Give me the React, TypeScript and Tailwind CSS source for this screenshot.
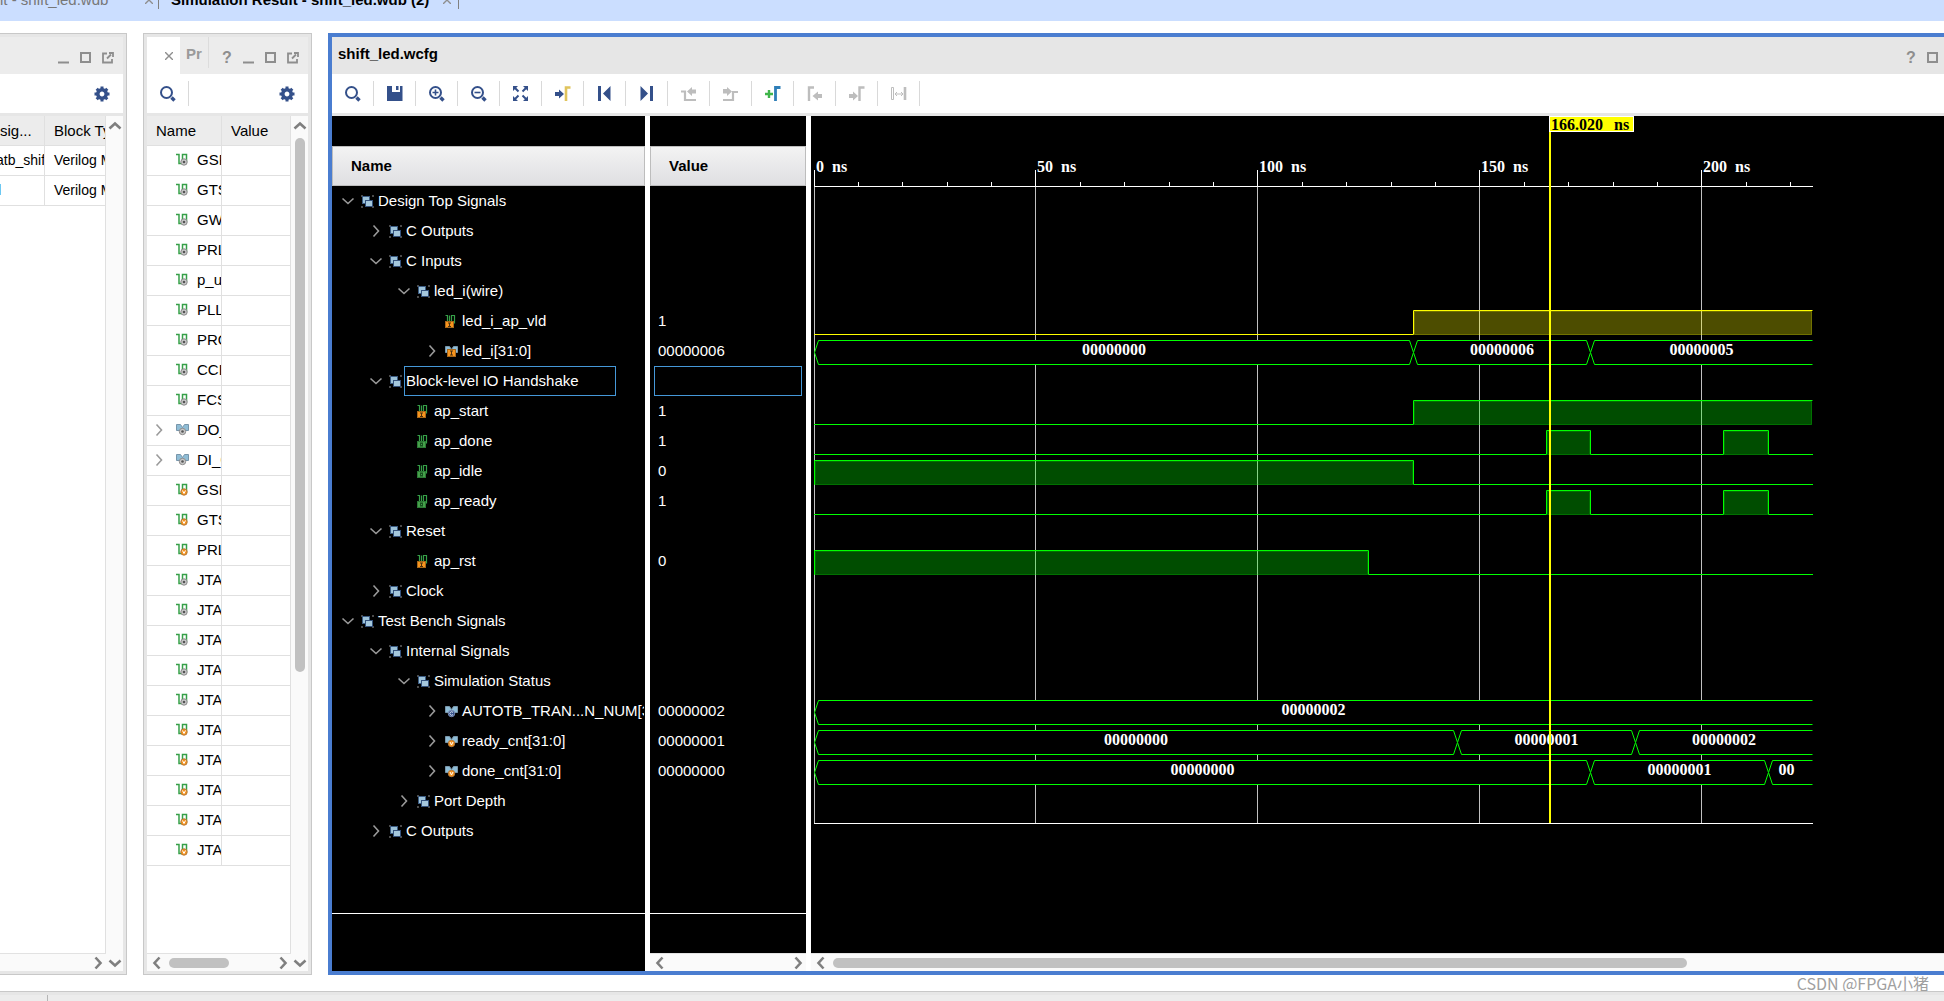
import type { ReactNode } from 'react';
import clsx from 'clsx';

type Dir = 'up' | 'down' | 'left' | 'right';

const CHEVRONS: Record<Dir, string> = {
    up: 'M1.5 9.5 7 4.5l5.5 5',
    down: 'M1.5 4.5 7 9.5l5.5-5',
    left: 'M9.5 1.5 4.5 7l5 5.5',
    right: 'M4.5 1.5 9.5 7l-5 5.5',
};

function Chevron({ dir, thin = false }: { dir: Dir; thin?: boolean }) {
    return (
        <svg width="14" height="14" viewBox="0 0 14 14" fill="none" stroke={thin ? '#9a9a9a' : '#7f7f7f'} strokeWidth={thin ? 1.6 : 2.6}>
            <path d={CHEVRONS[dir]} />
        </svg>
    );
}

/* ---------- signal icons ---------- */

type Kind = 'group' | 'net' | 'reg' | 'in' | 'out' | 'busNet' | 'busReg' | 'busIn' | 'busConst';

const Badge = ({ x, y, kind }: { x: number; y: number; kind: 'net' | 'reg' | 'const' }) => {
    const fill = { net: '#c9c9c9', reg: '#f7941d', const: '#33508a' }[kind];
    const ring = { net: '#8b8b8b', reg: '#b5793a', const: '#7f93bb' }[kind];
    return (
        <g>
            <circle cx={x} cy={y} r="3.2" fill={fill} stroke={ring} />
            {kind === 'net' && <circle cx={x} cy={y} r="1.3" fill="#555" />}
            {kind === 'reg' && <path d={`M${x - 1.5} ${y - 1.5}l1.5 3 1.5-3`} stroke="#fff" fill="none" />}
            {kind === 'const' && <path d={`M${x + 1.5} ${y - 1}a1.7 1.7 0 1 0 0 2`} stroke="#dfe6f5" fill="none" />}
        </g>
    );
};

function SignalIcon({ kind }: { kind: Kind }) {
    if (kind === 'group') {
        return (
            <svg width="13" height="13" viewBox="0 0 13 13">
                <path d="M0 0h2v2H0zM11 0h2v2h-2zM0 11h2v2H0zM11 11h2v2h-2z" fill="#4a4a4a" />
                <rect x="1.5" y="1.5" width="7" height="7" fill="#9dc3da" stroke="#3b5b82" />
                <rect x="4.5" y="5.5" width="7" height="6" fill="#a5c8dd" stroke="#33517c" />
            </svg>
        );
    }
    if (kind.startsWith('bus')) {
        return (
            <svg width="13" height="13" viewBox="0 0 13 13">
                <path d="M.5 1.5h4l2 3 2-3h4v6h-12z" fill="#8fbdd6" stroke="#7896ab" />
                {kind === 'busNet' && <Badge x={6.5} y={8.5} kind="net" />}
                {kind === 'busReg' && <Badge x={6.5} y={8.5} kind="reg" />}
                {kind === 'busConst' && <Badge x={6.5} y={8.5} kind="const" />}
                {kind === 'busIn' && (
                    <g>
                        <rect x="2.5" y="4.5" width="8" height="7" fill="#f7941d" stroke="#a8671a" />
                        <path d="M5 6h3M6.5 6v4M5 10h3" stroke="#4a3010" />
                    </g>
                )}
            </svg>
        );
    }
    const boxed = kind === 'in' || kind === 'out';
    return (
        <svg width="13" height="13" viewBox="0 0 13 13">
            <path
                d={boxed ? 'M.5.5h2v6M6.500 6.500v-6h3v8M4.500 6.500V.5' : 'M0 1.5h3v9h3.500v-9h4v7'}
                fill="none"
                stroke="#36a048"
                strokeWidth={boxed ? 1.2 : 1.5}
            />
            {kind === 'net' && <Badge x={8} y={9} kind="net" />}
            {kind === 'reg' && <Badge x={8} y={9} kind="reg" />}
            {kind === 'in' && (
                <g>
                    <rect x=".5" y="6.5" width="8" height="6" fill="#f7941d" stroke="#a8671a" />
                    <path d="M3 8h3M4.500 8v3.5M3 11.5h3" stroke="#4a3010" />
                </g>
            )}
            {kind === 'out' && (
                <g>
                    <rect x=".5" y="6.5" width="8" height="6" fill="#46a04b" stroke="#2c7a35" />
                    <rect x="3.5" y="8" width="2" height="3" fill="none" stroke="#175020" />
                </g>
            )}
        </svg>
    );
}

/* ---------- toolbar icons ---------- */

const NAVY = '#34508a';
const DIM = '#bdbdbd';

const icons: Record<string, ReactNode> = {
    Search: (
        <g fill="none" stroke={NAVY} strokeWidth="2">
            <circle cx="6.5" cy="6.5" r="5.5" />
            <path d="m11.5 11.5 3 3" strokeWidth="3.4" />
        </g>
    ),
    Save: <path d="M0 0h5v6h8V0h2.5v15H0zM9 0h2.5v4H9z" fill={NAVY} />,
    'Zoom In': (
        <g fill="none" stroke={NAVY} strokeWidth="2">
            <circle cx="6.5" cy="6.5" r="5.5" />
            <path d="M3.5 6.5h6M6.5 3.5v6" strokeWidth="1.6" />
            <path d="m11.5 11.5 3 3" strokeWidth="3.4" />
        </g>
    ),
    'Zoom Out': (
        <g fill="none" stroke={NAVY} strokeWidth="2">
            <circle cx="6.5" cy="6.5" r="5.5" />
            <path d="M3.5 6.5h6" strokeWidth="1.6" />
            <path d="m11.5 11.5 3 3" strokeWidth="3.4" />
        </g>
    ),
    'Zoom Fit': (
        <g fill={NAVY} stroke={NAVY}>
            <path d="M0 0h5L0 5zM15 0h-5l5 5zM0 15h5l-5-5zM15 15h-5l5-5z" stroke="none" />
            <path d="m2 2 3.500 3.500M13 2 9.500 5.500M2 13l3.500-3.500M13 13 9.500 9.500" strokeWidth="2" />
        </g>
    ),
    'Go to Cursor': (
        <g>
            <path d="M0 6h4V3.5L9 8l-5 4.5V10H0z" fill={NAVY} />
            <path d="M11 15V1.5h4.5" fill="none" stroke="#e0c45c" strokeWidth="2.6" />
        </g>
    ),
    'Go to Time 0': <path d="M1 0h3v15H1zM13.5 0v15L6 7.5z" fill={NAVY} />,
    'Go to Last Time': <path d="M11 0h3v15h-3zM1.500 0v15L9 7.500z" fill={NAVY} />,
    'Previous Transition': (
        <g>
            <path d="M0 5.500h4v8.500h11" fill="none" stroke={DIM} strokeWidth="2.2" />
            <path d="M15 3.500v4h-4V10L6 5.500 11 1v2.500z" fill={DIM} />
        </g>
    ),
    'Next Transition': (
        <g>
            <path d="M0 14h10V6h5" fill="none" stroke={DIM} strokeWidth="2.2" />
            <path d="M0 3h4V1l5 4.500L4 10V7.500H0z" fill={DIM} />
        </g>
    ),
    'Add Marker': (
        <g fill="none">
            <path d="M0 8h8M4 4v8" stroke="#3fb54a" strokeWidth="2.4" />
            <path d="M10.500 15V1.500h5" stroke="#2f7fb8" strokeWidth="2.800" />
        </g>
    ),
    'Previous Marker': (
        <g>
            <path d="M2 15V1.500h5" fill="none" stroke={DIM} strokeWidth="2.4" />
            <path d="M15 8v4h-4v2.500L5.500 10 11 5.500V8z" fill={DIM} />
        </g>
    ),
    'Next Marker': (
        <g>
            <path d="M10.500 15V1.500h5" fill="none" stroke={DIM} strokeWidth="2.400" />
            <path d="M0 8h4V5.500L9 10l-5 4.500V12H0z" fill={DIM} />
        </g>
    ),
    'Swap Cursors': (
        <g fill="none" stroke={DIM}>
            <path d="M.5 1.500h2v12h-2zM4 8h8M6 6 4 8l2 2M10 6l2 2-2 2" />
            <path d="M14 1v13" strokeWidth="2.600" />
        </g>
    ),
};

function ToolButton({ name }: { name: string }) {
    return (
        <button aria-label={name} title={name} className="flex h-[25px] w-[42px] shrink-0 items-center justify-center border-r border-[#d9d9d9]">
            <svg width="16" height="16" viewBox="0 0 16 16">{icons[name]}</svg>
        </button>
    );
}

function GearButton() {
    return (
        <button aria-label="Settings" className="mr-[13px] ml-auto">
            <svg width="16" height="16" viewBox="-8 -8 16 16">
                <circle r="4.200" fill="none" stroke={NAVY} strokeWidth="3.600" />
                {[0, 45, 90, 135].map((a) => (
                    <path key={a} d="M0-7.500v3M0 4.500v3" stroke={NAVY} strokeWidth="3" transform={`rotate(${a})`} />
                ))}
            </svg>
        </button>
    );
}

function WindowButtons({ names }: { names: string[] }) {
    return (
        <div className="ml-auto flex pt-[5px]">
            {names.map((name) => (
                <button key={name} aria-label={name} className="flex h-5 w-[22px] items-center justify-center text-base font-bold text-[#8e8e8e]">
                    {name === 'Help' ? (
                        '?'
                    ) : (
                        <svg width="12" height="12" viewBox="0 0 12 12" fill="none" stroke="#8e8e8e" strokeWidth="2">
                            {name === 'Minimize' && <path d="M0 10.500h11" />}
                            {name === 'Maximize' && <path d="M1 1h9v9h-9z" />}
                            {name === 'Float' && <path d="M5 1.500H1v9h9V7M5 6.500l4-4M7 1h4v4" strokeWidth="1.800" />}
                        </svg>
                    )}
                </button>
            ))}
        </div>
    );
}

/* ---------- scroll bars ---------- */

function HScroll({ left = true, right = true, thumb }: { left?: boolean; right?: boolean; thumb?: string }) {
    return (
        <div className="flex h-[18px] shrink-0 items-center border-t border-[#e2e2e2] bg-[#fafafa]">
            {left && (
                <button aria-label="Scroll left" className="flex w-5 shrink-0 justify-center">
                    <Chevron dir="left" />
                </button>
            )}
            <div className="flex-1 px-[2px]">{thumb && <div className={clsx('h-[10px] rounded-full bg-[#c1c1c1]', thumb)} />}</div>
            {right && (
                <button aria-label="Scroll right" className="flex w-4 shrink-0 justify-center">
                    <Chevron dir="right" />
                </button>
            )}
        </div>
    );
}

function VScroll({ thumb }: { thumb?: string }) {
    return (
        <div className="flex w-[17px] shrink-0 flex-col items-center bg-[#fafafa]">
            <button aria-label="Scroll up" className="flex h-5 items-center">
                <Chevron dir="up" />
            </button>
            <div className="flex-1 py-[2px]">{thumb && <div className={clsx('w-[10px] rounded-full bg-[#c1c1c1]', thumb)} />}</div>
            <button aria-label="Scroll down" className="flex h-4 items-center">
                <Chevron dir="down" />
            </button>
        </div>
    );
}

/* ---------- left panels ---------- */

const head = 'h-[30px] overflow-hidden border-r border-b border-[#e0e0e0] p-0 text-left font-normal whitespace-nowrap';
const cell = 'h-[30px] overflow-hidden border-r border-b border-[#e0e0e0] p-0 pb-[2px] text-left whitespace-nowrap';

function ScopePanel() {
    return (
        <section className="flex w-[127px] shrink-0 border border-l-0 border-[#c8c8c8]">
            <div className="flex min-w-0 flex-1 flex-col border-[3px] border-l-0 border-[#e6e6e6]">
                <div className="flex h-[37px] shrink-0 items-center bg-[#ececec] pr-1">
                    <WindowButtons names={['Minimize', 'Maximize', 'Float']} />
                </div>
                <div className="flex h-[42px] shrink-0 items-center border-b-[3px] border-[#e6e6e6]">
                    <GearButton />
                </div>
                <div className="flex min-h-0 flex-1">
                    <div className="flex min-w-0 flex-1 flex-col">
                        <div className="flex-1 overflow-hidden border-r border-[#e0e0e0]">
                            <table className="w-full table-fixed border-separate border-spacing-0">
                                <thead>
                                    <tr className="bg-[#ececec]">
                                        <th className={clsx(head, 'w-[45px]')}>sig...</th>
                                        <th className={clsx(head, 'border-r-0 pl-[9px]')}>Block Type</th>
                                    </tr>
                                </thead>
                                <tbody className="text-sm leading-5">
                                    <tr>
                                        <td className={cell}>
                                            <div className="-ml-1">atb_shift</div>
                                        </td>
                                        <td className={clsx(cell, 'border-r-0 pl-[9px]')}>Verilog Module</td>
                                    </tr>
                                    <tr>
                                        <td className={cell}>
                                            <div className="h-[11px] w-px bg-[#6cc8f2]" />
                                        </td>
                                        <td className={clsx(cell, 'border-r-0 pl-[9px]')}>Verilog Module</td>
                                    </tr>
                                </tbody>
                            </table>
                        </div>
                        <HScroll left={false} />
                    </div>
                    <VScroll />
                </div>
            </div>
        </section>
    );
}

const objects: [string, Kind][] = [
    ['GSR', 'net'],
    ['GTS', 'net'],
    ['GWE', 'net'],
    ['PRLD', 'net'],
    ['p_up_tmp', 'net'],
    ['PLL_LOCKG', 'net'],
    ['PROGB_GLBL', 'net'],
    ['CCLKO_GLBL', 'net'],
    ['FCSBO_GLBL', 'net'],
    ['DO_GLBL', 'busNet'],
    ['DI_GLBL', 'busNet'],
    ['GSR_int', 'reg'],
    ['GTS_int', 'reg'],
    ['PRLD_int', 'reg'],
    ['JTAG_TDO_GLBL', 'net'],
    ['JTAG_TCK_GLBL', 'net'],
    ['JTAG_TDI_GLBL', 'net'],
    ['JTAG_TMS_GLBL', 'net'],
    ['JTAG_TRST_GLBL', 'net'],
    ['JTAG_CAPTURE_GLBL', 'reg'],
    ['JTAG_RESET_GLBL', 'reg'],
    ['JTAG_SHIFT_GLBL', 'reg'],
    ['JTAG_UPDATE_GLBL', 'reg'],
    ['JTAG_RUNTEST_GLBL', 'reg'],
];

function ObjectsPanel() {
    return (
        <section className="flex w-[169px] shrink-0 border border-[#c8c8c8]">
            <div className="flex min-w-0 flex-1 flex-col border-[3px] border-[#e6e6e6]">
                <div className="flex h-[37px] shrink-0 items-center bg-[#ececec] pr-1">
                    <button aria-label="Close tab" className="flex h-full w-[33px] items-center justify-end bg-white pr-[7px]">
                        <svg width="8" height="8" viewBox="0 0 8 8" stroke="#8e8e8e" strokeWidth="1.400">
                            <path d="m0 0 8 8M8 0 0 8" />
                        </svg>
                    </button>
                    <button className="h-[31px] w-[29px] self-start border-r border-[#dcdcdc] pt-[2px] font-bold text-[#9a9a9a]">Pr</button>
                    <WindowButtons names={['Help', 'Minimize', 'Maximize', 'Float']} />
                </div>
                <div className="flex h-[42px] shrink-0 items-center border-b-[3px] border-[#e6e6e6]">
                    <ToolButton name="Search" />
                    <GearButton />
                </div>
                <div className="flex min-h-0 flex-1">
                    <div className="flex min-w-0 flex-1 flex-col">
                        <div className="flex-1 overflow-hidden border-r border-[#e0e0e0]">
                            <table className="w-full table-fixed border-separate border-spacing-0">
                                <thead>
                                    <tr className="bg-[#ececec]">
                                        <th className={clsx(head, 'w-[75px] pl-[9px]')}>Name</th>
                                        <th className={clsx(head, 'border-r-0 pl-[9px]')}>Value</th>
                                    </tr>
                                </thead>
                                <tbody>
                                    {objects.map(([name, kind]) => (
                                        <tr key={name}>
                                            <td className={cell}>
                                                <div className="flex items-center">
                                                    <div className="w-[29px] shrink-0 pl-[5px]">
                                                        {kind === 'busNet' && (
                                                            <button aria-label={`Expand ${name}`} className="block">
                                                                <Chevron dir="right" thin />
                                                            </button>
                                                        )}
                                                    </div>
                                                    <div className="w-[21px] shrink-0">
                                                        <SignalIcon kind={kind} />
                                                    </div>
                                                    {name}
                                                </div>
                                            </td>
                                            <td className={clsx(cell, 'border-r-0')} />
                                        </tr>
                                    ))}
                                </tbody>
                            </table>
                        </div>
                        <HScroll thumb="w-[60px]" />
                    </div>
                    <VScroll thumb="h-[534px]" />
                </div>
            </div>
        </section>
    );
}

/* ---------- wave window ---------- */

type Row = {
    name: string;
    level: number;
    kind: Kind;
    arrow?: Dir;
    value?: string;
    selected?: boolean;
    color?: string;
    // level signals: [start, end] of each high pulse, in ns
    high?: [number, number][];
    // buses: [start, end, text], in ns
    bus?: [number, number, string][];
};

const END = 225;

const rows: Row[] = [
    { name: 'Design Top Signals', level: 0, kind: 'group', arrow: 'down' },
    { name: 'C Outputs', level: 1, kind: 'group', arrow: 'right' },
    { name: 'C Inputs', level: 1, kind: 'group', arrow: 'down' },
    { name: 'led_i(wire)', level: 2, kind: 'group', arrow: 'down' },
    { name: 'led_i_ap_vld', level: 3, kind: 'in', value: '1', color: '#ffff00', high: [[135, END]] },
    { name: 'led_i[31:0]', level: 3, kind: 'busIn', arrow: 'right', value: '00000006', bus: [[0, 135, '00000000'], [135, 175, '00000006'], [175, END, '00000005']] },
    { name: 'Block-level IO Handshake', level: 1, kind: 'group', arrow: 'down', selected: true },
    { name: 'ap_start', level: 2, kind: 'in', value: '1', high: [[135, END]] },
    { name: 'ap_done', level: 2, kind: 'out', value: '1', high: [[165, 175], [205, 215]] },
    { name: 'ap_idle', level: 2, kind: 'out', value: '0', high: [[0, 135]] },
    { name: 'ap_ready', level: 2, kind: 'out', value: '1', high: [[165, 175], [205, 215]] },
    { name: 'Reset', level: 1, kind: 'group', arrow: 'down' },
    { name: 'ap_rst', level: 2, kind: 'in', value: '0', high: [[0, 125]] },
    { name: 'Clock', level: 1, kind: 'group', arrow: 'right' },
    { name: 'Test Bench Signals', level: 0, kind: 'group', arrow: 'down' },
    { name: 'Internal Signals', level: 1, kind: 'group', arrow: 'down' },
    { name: 'Simulation Status', level: 2, kind: 'group', arrow: 'down' },
    { name: 'AUTOTB_TRAN...N_NUM[31:0]', level: 3, kind: 'busConst', arrow: 'right', value: '00000002', bus: [[0, END, '00000002']] },
    { name: 'ready_cnt[31:0]', level: 3, kind: 'busReg', arrow: 'right', value: '00000001', bus: [[0, 145, '00000000'], [145, 185, '00000001'], [185, END, '00000002']] },
    { name: 'done_cnt[31:0]', level: 3, kind: 'busReg', arrow: 'right', value: '00000000', bus: [[0, 175, '00000000'], [175, 215, '00000001'], [215, END, '00']] },
    { name: 'Port Depth', level: 2, kind: 'group', arrow: 'right' },
    { name: 'C Outputs', level: 1, kind: 'group', arrow: 'right' },
];

const ROW_H = 30;
const RULER_H = 70;
const BOTTOM = 707;
const CURSOR = 166.02;

const tx = (ns: number) => 3 + Math.floor(ns * 4.439);

function LevelTrace({ row, top }: { row: Row; top: number }) {
    const color = row.color ?? '#00ff00';
    const hi = top + 4.5;
    const lo = top + 28.5;
    let d = `M${tx(0)} ${lo}`;
    for (const [a, b] of row.high!) {
        d += `H${tx(a) + 0.5}V${hi}H${tx(b) + 0.5}`;
        if (b < END) d += `V${lo}`;
    }
    if (row.high![row.high!.length - 1][1] < END) d += `H${tx(END) + 1}`;
    return (
        <g>
            {row.high!.map(([a, b]) => (
                <rect key={a} x={tx(a) + 1.5} y={hi + 1} width={tx(b) - tx(a) - 2} height={23} fill={color} fillOpacity="0.3" stroke={color} strokeOpacity="0.35" />
            ))}
            <path d={d} fill="none" stroke={color} />
        </g>
    );
}

function BusTrace({ row, top }: { row: Row; top: number }) {
    const hi = top + 4.5;
    const lo = top + 28.5;
    const mid = top + 16.5;
    return (
        <g>
            {row.bus!.map(([a, b, text]) => {
                const x1 = tx(a) + 0.5;
                const x2 = tx(b) + 0.5;
                const open = b === END;
                const narrow = x2 - x1 < 64;
                return (
                    <g key={a}>
                        <path
                            d={
                                open
                                    ? `M${x2} ${hi}H${x1 + 4}L${x1} ${mid}L${x1 + 4} ${lo}H${x2}`
                                    : `M${x1} ${mid}L${x1 + 4} ${hi}H${x2 - 4}L${x2} ${mid}L${x2 - 4} ${lo}H${x1 + 4}Z`
                            }
                            fill="#000"
                            stroke="#00ff00"
                        />
                        <text x={narrow ? x1 + 10 : (x1 + x2) / 2} y={top + 19} textAnchor={narrow ? 'start' : 'middle'} fill="#fff">
                            {text}
                        </text>
                    </g>
                );
            })}
        </g>
    );
}

function Waves() {
    const majors = [0, 50, 100, 150, 200];
    const minors = Array.from({ length: 23 }, (_, i) => i * 10).filter((t) => t % 50 !== 0);
    return (
        <svg width="1002" height="720" className="block shrink-0 font-['Liberation_Serif',serif] text-base font-bold">
            {majors.map((t) => (
                <g key={t}>
                    <path d={`M${tx(t) + 0.5} ${RULER_H}V${BOTTOM}`} stroke="#c0c0c0" />
                    <path d={`M${tx(t) + 0.5} 54V${RULER_H}`} stroke="#fff" />
                    <text x={tx(t) + 2} y="56" fill="#fff">
                        {t} <tspan dx="4">ns</tspan>
                    </text>
                </g>
            ))}
            {minors.map((t) => (
                <path key={t} d={`M${tx(t) + 0.5} 66v4`} stroke="#fff" />
            ))}
            <path d={`M${tx(0)} ${RULER_H + 0.5}H${tx(END) + 1}M${tx(0)} ${BOTTOM + 0.5}H${tx(END) + 1}`} stroke="#fff" />
            {rows.map((row, i) => {
                const top = RULER_H + i * ROW_H;
                if (row.high) return <LevelTrace key={i} row={row} top={top} />;
                if (row.bus) return <BusTrace key={i} row={row} top={top} />;
                return null;
            })}
            <path d={`M${tx(CURSOR)} 16V${BOTTOM}`} stroke="#ffff00" strokeWidth="2" />
            <rect x={tx(CURSOR) - 0.5} y="0.5" width="84" height="15" fill="#ffff00" stroke="#fff" />
            <text x={tx(CURSOR) + 1} y="14" fill="#000">
                {CURSOR.toFixed(3)} <tspan dx="7">ns</tspan>
            </text>
        </svg>
    );
}

const headerBar = 'h-10 shrink-0 border border-[#bdbdbd] bg-linear-to-b from-[#f3f3f3] to-[#dfdfe2] pl-[18px] leading-[38px] font-bold text-black';

function WavePanel() {
    return (
        <section className="flex min-w-0 flex-1 flex-col border-4 border-r-0 border-[#4a7dd0]">
            <div className="flex h-[37px] shrink-0 items-center bg-[#e6e6e6]">
                <h1 className="pb-1 pl-[6px] font-bold">shift_led.wcfg</h1>
                <WindowButtons names={['Help', 'Maximize']} />
            </div>
            <div className="flex h-[42px] shrink-0 items-center border-b-[3px] border-[#e6e6e6]">
                {Object.keys(icons).map((name) => (
                    <ToolButton key={name} name={name} />
                ))}
            </div>
            <div className="flex min-h-0 flex-1 gap-[5px] text-white">
                <div className="flex w-[313px] shrink-0 flex-col overflow-hidden bg-black pt-[30px]">
                    <div className={headerBar}>Name</div>
                    {rows.map((row, i) => (
                        <div key={i} className="flex h-[30px] shrink-0 items-center whitespace-nowrap" style={{ paddingLeft: 9 + row.level * 28 }}>
                            <div className="w-[20px] shrink-0">
                                {row.arrow && (
                                    <button aria-label={`Toggle ${row.name}`} className="block">
                                        <Chevron dir={row.arrow} thin />
                                    </button>
                                )}
                            </div>
                            <div className="w-[15px] shrink-0">
                                <SignalIcon kind={row.kind} />
                            </div>
                            <span className={clsx('min-w-0 overflow-hidden border px-px leading-7', row.selected ? 'w-[212px] border-[#4598d8]' : 'border-transparent')}>
                                {row.name}
                            </span>
                        </div>
                    ))}
                    <div className="mt-auto h-[58px] shrink-0 border-t border-white" />
                </div>
                <div className="flex w-[156px] shrink-0 flex-col bg-black pt-[30px]">
                    <div className={headerBar}>Value</div>
                    {rows.map((row, i) => (
                        <div key={i} className={clsx('mx-1 h-[30px] shrink-0 border px-[3px] leading-7', row.selected ? 'border-[#4598d8]' : 'border-transparent')}>
                            {row.value}
                        </div>
                    ))}
                    <div className="mt-auto h-[40px] shrink-0 border-t border-white" />
                    <HScroll />
                </div>
                <div className="flex min-w-0 flex-1 flex-col bg-black">
                    <div className="flex-1 overflow-hidden">
                        <Waves />
                    </div>
                    <HScroll right={false} thumb="w-[77%]" />
                </div>
            </div>
        </section>
    );
}

function TabClose() {
    return (
        <button aria-label="Close" className="flex w-[22px] justify-center">
            <svg width="8" height="8" viewBox="0 0 8 8" stroke="#8e8e8e" strokeWidth="1.400">
                <path d="m0 0 8 8M8 0 0 8" />
            </svg>
        </button>
    );
}

export default function App() {
    return (
        <div className="flex h-screen flex-col overflow-hidden bg-white font-['Liberation_Sans',Arial,sans-serif] text-[15px] leading-5 text-black">
            <nav className="h-[21px] shrink-0 overflow-hidden bg-[#cbdeff]">
                <div className="-mt-[9px] flex h-[18px] whitespace-nowrap">
                    <div className="flex w-[159px] items-center justify-end border-r border-[#808080]">
                        <span className="pr-[32px] text-[#777]">lt - shift_led.wdb</span>
                        <TabClose />
                    </div>
                    <div className="flex w-[300px] items-center border-r border-[#808080] pl-3">
                        <span className="font-bold">Simulation Result - shift_led.wdb (2)</span>
                        <span className="ml-auto">
                            <TabClose />
                        </span>
                    </div>
                </div>
            </nav>
            <main className="flex min-h-0 flex-1 gap-4 pt-3">
                <ScopePanel />
                <ObjectsPanel />
                <WavePanel />
            </main>
            <div className="flex h-4 shrink-0 items-center justify-end pr-[15px] font-['Noto_Sans_CJK_SC',sans-serif] text-base text-[#a0a0a0]">CSDN @FPGA小猪</div>
            <footer className="h-[10px] shrink-0 border-t border-[#c8c8c8] bg-[#ececec]">
                <div className="h-[3px] bg-[#e6e6e6]" />
                <div className="h-[6px] w-[48px] border-r border-[#b5b5b5]" />
            </footer>
        </div>
    );
}
